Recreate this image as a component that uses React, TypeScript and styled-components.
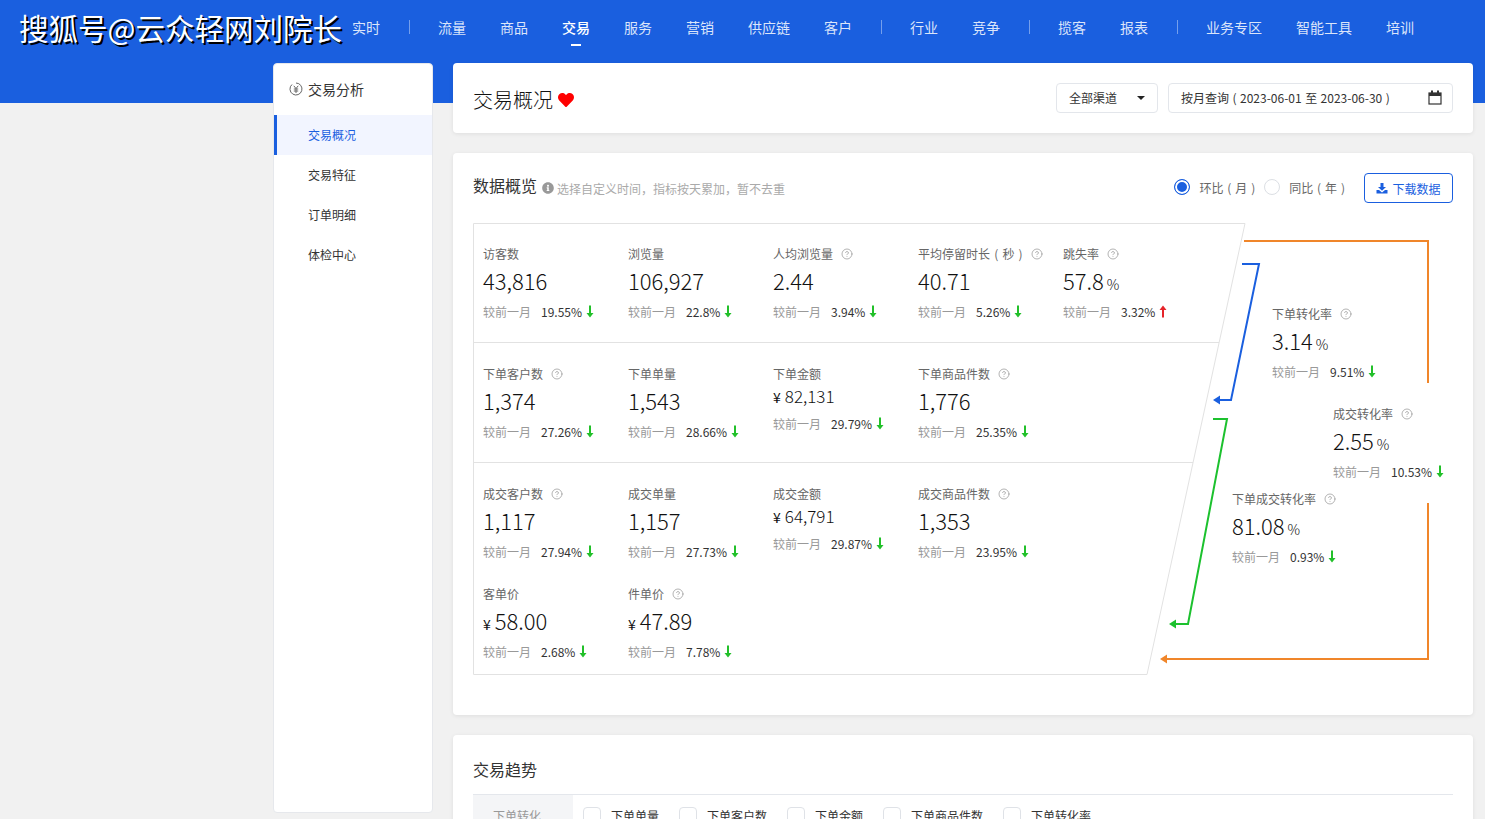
import React from "react";
import styled, { createGlobalStyle } from "styled-components";
import { CircleHelp } from "lucide-react";
import { FaHeart, FaInfoCircle } from "react-icons/fa";

const BLUE = "#1a5fdf";

const GlobalStyle = createGlobalStyle`
  html, body {
    margin: 0;
    padding: 0;
    background: #f1f1f1;
    font-family: "Noto Sans CJK SC", "Liberation Sans", sans-serif;
    color: #333;
  }
  * { box-sizing: border-box; }
`;

const Page = styled.div`
  position: relative;
  height: 819px;
  overflow: hidden;
`;

const Watermark = styled.div`
  position: absolute;
  top: 6px;
  left: 19px;
  font-size: 29.5px;
  line-height: 42px;
  color: #fff;
  white-space: nowrap;
  text-shadow: 2px 2px 0 #000;
`;

const Header = styled.header`
  height: 103px;
  background: ${BLUE};
  padding: 17px 0 0 335px;
`;

const Nav = styled.nav`
  display: flex;
  align-items: flex-start;
`;

const NavItem = styled.a<{ $active?: boolean }>`
  position: relative;
  padding: 0 17px;
  font-size: 14px;
  line-height: 20px;
  color: ${(p) => (p.$active ? "#fff" : "rgba(255,255,255,0.85)")};
  font-weight: ${(p) => (p.$active ? 500 : 400)};

  &::after {
    content: "";
    display: ${(p) => (p.$active ? "block" : "none")};
    position: absolute;
    left: 26px;
    top: 27px;
    width: 10px;
    height: 2px;
    background: #fff;
  }
`;

const NavDivider = styled.span`
  width: 1px;
  height: 14px;
  margin: 3px 11px 0 12px;
  background: rgba(255, 255, 255, 0.4);
`;

const Body = styled.div`
  display: flex;
  gap: 20px;
  margin-top: -40px;
  padding-left: 273px;
`;

const Sidebar = styled.aside`
  width: 160px;
  height: 750px;
  flex: none;
  background: #fff;
  border: 1px solid #e6e8ec;
  border-radius: 4px;
`;

const SideTitle = styled.div`
  display: flex;
  align-items: center;
  gap: 5px;
  height: 51px;
  padding: 0 0 2px 15px;
  font-size: 14px;
  color: #333;
`;

const SideItem = styled.div<{ $active?: boolean }>`
  height: 40px;
  line-height: 40px;
  padding-left: ${(p) => (p.$active ? "31px" : "34px")};
  font-size: 12px;
  color: ${(p) => (p.$active ? BLUE : "#333")};
  background: ${(p) => (p.$active ? "#f2f5ff" : "transparent")};
  border-left: ${(p) => (p.$active ? `3px solid ${BLUE}` : "none")};
`;

const Main = styled.main`
  width: 1020px;
  flex: none;
  display: flex;
  flex-direction: column;
  gap: 20px;
`;

const Card = styled.section`
  background: #fff;
  border-radius: 4px;
  box-shadow: 0 1px 4px rgba(0, 0, 0, 0.08);
  padding: 0 20px;
`;

const TitleCard = styled(Card)`
  height: 70px;
  display: flex;
  align-items: center;
  justify-content: space-between;
`;

const PageTitle = styled.h1`
  margin: 2px 0 0;
  display: flex;
  align-items: center;
  gap: 5px;
  font-size: 20px;
  font-weight: 300;
  color: #111;

  svg {
    margin-top: 2px;
  }
`;

const Filters = styled.div`
  display: flex;
  gap: 10px;
`;

const Field = styled.div<{ $width: number }>`
  width: ${(p) => p.$width}px;
  height: 30px;
  padding: 0 10px 2px 12px;
  display: flex;
  align-items: center;
  justify-content: space-between;
  border: 1px solid #e3e6eb;
  border-radius: 4px;
  font-size: 12px;
  word-spacing: 0.8px;
  color: #333;
`;

const Caret = styled.span`
  width: 0;
  height: 0;
  margin: 2px 2px 0 0;
  border-left: 4px solid transparent;
  border-right: 4px solid transparent;
  border-top: 4px solid #222;
`;

const DataCard = styled(Card)`
  height: 562px;
  padding-top: 20px;
`;

const CardHead = styled.div`
  height: 30px;
  display: flex;
  align-items: center;
  justify-content: space-between;
`;

const HeadLeft = styled.div`
  display: flex;
  align-items: center;
`;

const CardTitle = styled.h2<{ $lift?: boolean }>`
  margin: 0 0 ${(p) => (p.$lift ? "6px" : "0")};
  font-size: 16px;
  line-height: 26px;
  font-weight: 400;
  color: #333;
`;

const Hint = styled.span`
  display: flex;
  align-items: center;
  gap: 3px;
  margin-left: 5px;
  font-size: 12px;
  color: #aaa;
`;

const HeadRight = styled.div`
  display: flex;
  align-items: center;
`;

const Radio = styled.span<{ $on?: boolean }>`
  width: 16px;
  height: 16px;
  margin-bottom: 2px;
  border-radius: 50%;
  border: 1px solid ${(p) => (p.$on ? BLUE : "#dcdfe4")};
  background: ${(p) => (p.$on ? BLUE : "#fff")};
  box-shadow: ${(p) => (p.$on ? "inset 0 0 0 2px #fff" : "none")};
`;

const RadioText = styled.span`
  margin: 0 9px 2px;
  font-size: 12px;
  word-spacing: 1.2px;
  color: #666;
`;

const DownloadButton = styled.button`
  width: 89px;
  height: 30px;
  margin-left: 10px;
  padding: 0;
  display: flex;
  align-items: center;
  justify-content: center;
  gap: 4px;
  background: #fff;
  border: 1px solid ${BLUE};
  border-radius: 4px;
  font-family: inherit;
  font-size: 12px;
  color: ${BLUE};
`;

const Funnel = styled.div`
  position: relative;
  height: 460px;
  margin-top: 20px;
`;

const FunnelDrawing = styled.svg`
  position: absolute;
  inset: 0;
  pointer-events: none;
`;

const MetricRow = styled.div<{ $height: number }>`
  height: ${(p) => p.$height}px;
  padding-top: 20px;
  display: grid;
  grid-template-columns: repeat(5, 145px);
  grid-auto-rows: 100px;
`;

const Metric = styled.div`
  padding-left: 10px;
`;

const FunnelNode = styled.div<{ $left: number; $top: number }>`
  position: absolute;
  left: ${(p) => p.$left}px;
  top: ${(p) => p.$top}px;
`;

const Label = styled.div`
  height: 20px;
  display: flex;
  align-items: center;
  gap: 8px;
  font-size: 12px;
  word-spacing: 1.5px;
  color: #666;
  white-space: nowrap;

  svg {
    margin-top: 2px;
  }
`;

const Value = styled.div<{ $small?: boolean }>`
  height: ${(p) => (p.$small ? "26px" : "34px")};
  font-size: ${(p) => (p.$small ? "17px" : "22px")};
  line-height: ${(p) => (p.$small ? "26px" : "34px")};
  font-weight: 300;
  color: #111;
  white-space: nowrap;
`;

const Unit = styled.span`
  margin-left: 3px;
  font-size: 14px;
`;

const Prefix = styled.span`
  margin-right: 4px;
  font-size: 14px;
  font-weight: 400;
`;

const Compare = styled.div`
  margin-top: 4px;
  height: 20px;
  display: flex;
  align-items: center;
  font-size: 12px;
  color: #333;
  white-space: nowrap;
`;

const CompareLabel = styled.span`
  width: 58px;
  color: #999;
`;

const TrendCard = styled(Card)`
  height: 200px;
  padding-top: 21px;
`;

const TrendTabs = styled.div`
  display: flex;
  margin-top: 12px;
  border-top: 1px solid #e4e7ec;
`;

const TrendTab = styled.div`
  width: 100px;
  height: 60px;
  padding: 12px 0 0 20px;
  background: #f4f5f7;
  font-size: 12px;
  color: #999;
`;

const Checks = styled.div`
  display: flex;
  gap: 20px;
  padding: 12px 0 0 10px;
`;

const Check = styled.label`
  display: flex;
  align-items: flex-start;
  gap: 10px;
  font-size: 12px;
  line-height: 18px;
  color: #333;
`;

const CheckBox = styled.span`
  width: 18px;
  height: 18px;
  border: 1px solid #dfe2e7;
  border-radius: 4px;
`;

const IconSlot = styled.span`
  display: inline-flex;
  margin-left: 4px;
`;

function Trend({ up }: { up?: boolean }) {
  const color = up ? "#e5242a" : "#22c02a";
  return (
    <IconSlot>
      <svg width="8" height="13" viewBox="0 0 8 13">
        {up ? (
          <path d="M4 0.5 L7.5 5 H5 V12.5 H3 V5 H0.5 Z" fill={color} />
        ) : (
          <path d="M4 12.5 L7.5 8 H5 V0.5 H3 V8 H0.5 Z" fill={color} />
        )}
      </svg>
    </IconSlot>
  );
}

function YenIcon() {
  return (
    <svg width="14" height="14" viewBox="0 0 14 14" fill="none" stroke="#666" strokeWidth="1">
      <path d="M7 1 A6 6 0 1 1 3 2.5" />
      <path d="M4.8 3.8 L7 6.6 L9.2 3.8 M4.8 7 H9.2 M4.8 9 H9.2 M7 6.6 V11" />
    </svg>
  );
}

function CalendarIcon() {
  return (
    <svg width="14" height="15" viewBox="0 0 14 15" fill="none">
      <rect x="1" y="3" width="12" height="11" stroke="#333" strokeWidth="1.2" />
      <rect x="1" y="3" width="12" height="3" fill="#333" />
      <rect x="3" y="0.5" width="2" height="4" fill="#333" />
      <rect x="9" y="0.5" width="2" height="4" fill="#333" />
    </svg>
  );
}

function DownloadIcon() {
  return (
    <svg width="12" height="12" viewBox="0 0 12 12" fill={BLUE}>
      <path d="M4.5 1 H7.5 V5 H10 L6 8.8 L2 5 H4.5 Z" />
      <path d="M0.5 8 H3 L6 10.4 L9 8 H11.5 V11.5 H0.5 Z" />
    </svg>
  );
}

type MetricData = {
  label: string;
  value: string;
  rate: string;
  help?: boolean;
  up?: boolean;
  unit?: string;
  prefix?: string;
  small?: boolean;
};

const rows: { height: number; items: MetricData[] }[] = [
  {
    height: 120,
    items: [
      { label: "访客数", value: "43,816", rate: "19.55%" },
      { label: "浏览量", value: "106,927", rate: "22.8%" },
      { label: "人均浏览量", value: "2.44", rate: "3.94%", help: true },
      { label: "平均停留时长 ( 秒 )", value: "40.71", rate: "5.26%", help: true },
      { label: "跳失率", value: "57.8", rate: "3.32%", help: true, up: true, unit: "%" },
    ],
  },
  {
    height: 120,
    items: [
      { label: "下单客户数", value: "1,374", rate: "27.26%", help: true },
      { label: "下单单量", value: "1,543", rate: "28.66%" },
      { label: "下单金额", value: "82,131", rate: "29.79%", prefix: "¥", small: true },
      { label: "下单商品件数", value: "1,776", rate: "25.35%", help: true },
    ],
  },
  {
    height: 212,
    items: [
      { label: "成交客户数", value: "1,117", rate: "27.94%", help: true },
      { label: "成交单量", value: "1,157", rate: "27.73%" },
      { label: "成交金额", value: "64,791", rate: "29.87%", prefix: "¥", small: true },
      { label: "成交商品件数", value: "1,353", rate: "23.95%", help: true },
      { label: "", value: "", rate: "" },
      { label: "客单价", value: "58.00", rate: "2.68%", prefix: "¥" },
      { label: "件单价", value: "47.89", rate: "7.78%", help: true, prefix: "¥" },
    ],
  },
];

const nodes: { left: number; top: number; item: MetricData }[] = [
  { left: 799, top: 80, item: { label: "下单转化率", value: "3.14", rate: "9.51%", help: true, unit: "%" } },
  { left: 860, top: 180, item: { label: "成交转化率", value: "2.55", rate: "10.53%", help: true, unit: "%" } },
  { left: 759, top: 265, item: { label: "下单成交转化率", value: "81.08", rate: "0.93%", help: true, unit: "%" } },
];

const navGroups = [
  ["实时"],
  ["流量", "商品", "交易", "服务", "营销", "供应链", "客户"],
  ["行业", "竞争"],
  ["揽客", "报表"],
  ["业务专区", "智能工具", "培训"],
];

const trendChecks = ["下单单量", "下单客户数", "下单金额", "下单商品件数", "下单转化率"];

function MetricBody({ item }: { item: MetricData }) {
  if (!item.label) return null;
  return (
    <>
      <Label>
        {item.label}
        {item.help && <CircleHelp size={12} color="#999" strokeWidth={1.5} />}
      </Label>
      <Value $small={item.small}>
        {item.prefix && <Prefix>{item.prefix}</Prefix>}
        {item.value}
        {item.unit && <Unit>{item.unit}</Unit>}
      </Value>
      <Compare>
        <CompareLabel>较前一月</CompareLabel>
        {item.rate}
        <Trend up={item.up} />
      </Compare>
    </>
  );
}

export default function App() {
  return (
    <Page>
      <GlobalStyle />
      <Header>
        <Nav>
          {navGroups.map((group, i) => (
            <React.Fragment key={i}>
              {i > 0 && <NavDivider />}
              {group.map((name) => (
                <NavItem key={name} $active={name === "交易"}>
                  {name}
                </NavItem>
              ))}
            </React.Fragment>
          ))}
        </Nav>
      </Header>
      <Watermark>搜狐号@云众轻网刘院长</Watermark>
      <Body>
        <Sidebar>
          <SideTitle>
            <YenIcon />
            交易分析
          </SideTitle>
          <SideItem $active>交易概况</SideItem>
          <SideItem>交易特征</SideItem>
          <SideItem>订单明细</SideItem>
          <SideItem>体检中心</SideItem>
        </Sidebar>
        <Main>
          <TitleCard>
            <PageTitle>
              交易概况
              <FaHeart size={16} color="#f00" />
            </PageTitle>
            <Filters>
              <Field $width={102}>
                全部渠道
                <Caret />
              </Field>
              <Field $width={285}>
                按月查询 ( 2023-06-01 至 2023-06-30 )
                <CalendarIcon />
              </Field>
            </Filters>
          </TitleCard>
          <DataCard>
            <CardHead>
              <HeadLeft>
                <CardTitle $lift>数据概览</CardTitle>
                <Hint>
                  <FaInfoCircle size={12} color="#999" />
                  选择自定义时间，指标按天累加，暂不去重
                </Hint>
              </HeadLeft>
              <HeadRight>
                <Radio $on />
                <RadioText>环比 ( 月 )</RadioText>
                <Radio />
                <RadioText>同比 ( 年 )</RadioText>
                <DownloadButton>
                  <DownloadIcon />
                  下载数据
                </DownloadButton>
              </HeadRight>
            </CardHead>
            <Funnel>
              <FunnelDrawing width="980" height="460" viewBox="0 0 980 460" fill="none">
                <g stroke="#e2e2e2" strokeWidth="1">
                  <path d="M0.5 0.5 H772 L674 451.5 H0.5 Z" />
                  <path d="M0.5 119.5 H746" />
                  <path d="M0.5 239.5 H720" />
                </g>
                <g stroke="#f0862a" strokeWidth="2">
                  <path d="M771 18 H955 V160" />
                  <path d="M955 280 V436 H692" />
                </g>
                <path d="M687 436 L694 431.5 V440.5 Z" fill="#f0862a" />
                <path d="M769 41 H786 L758 177 H745" stroke={BLUE} strokeWidth="2" />
                <path d="M740 177 L747 172.5 V181.5 Z" fill={BLUE} />
                <path d="M740 196 H754 L715 401 H701" stroke="#1cc12e" strokeWidth="2" />
                <path d="M696 401 L703 396.5 V405.5 Z" fill="#1cc12e" />
              </FunnelDrawing>
              {rows.map((row, i) => (
                <MetricRow key={i} $height={row.height}>
                  {row.items.map((item, j) => (
                    <Metric key={j}>
                      <MetricBody item={item} />
                    </Metric>
                  ))}
                </MetricRow>
              ))}
              {nodes.map((node) => (
                <FunnelNode key={node.item.label} $left={node.left} $top={node.top}>
                  <MetricBody item={node.item} />
                </FunnelNode>
              ))}
            </Funnel>
          </DataCard>
          <TrendCard>
            <CardTitle>交易趋势</CardTitle>
            <TrendTabs>
              <TrendTab>下单转化</TrendTab>
              <Checks>
                {trendChecks.map((name) => (
                  <Check key={name}>
                    <CheckBox />
                    {name}
                  </Check>
                ))}
              </Checks>
            </TrendTabs>
          </TrendCard>
        </Main>
      </Body>
    </Page>
  );
}
